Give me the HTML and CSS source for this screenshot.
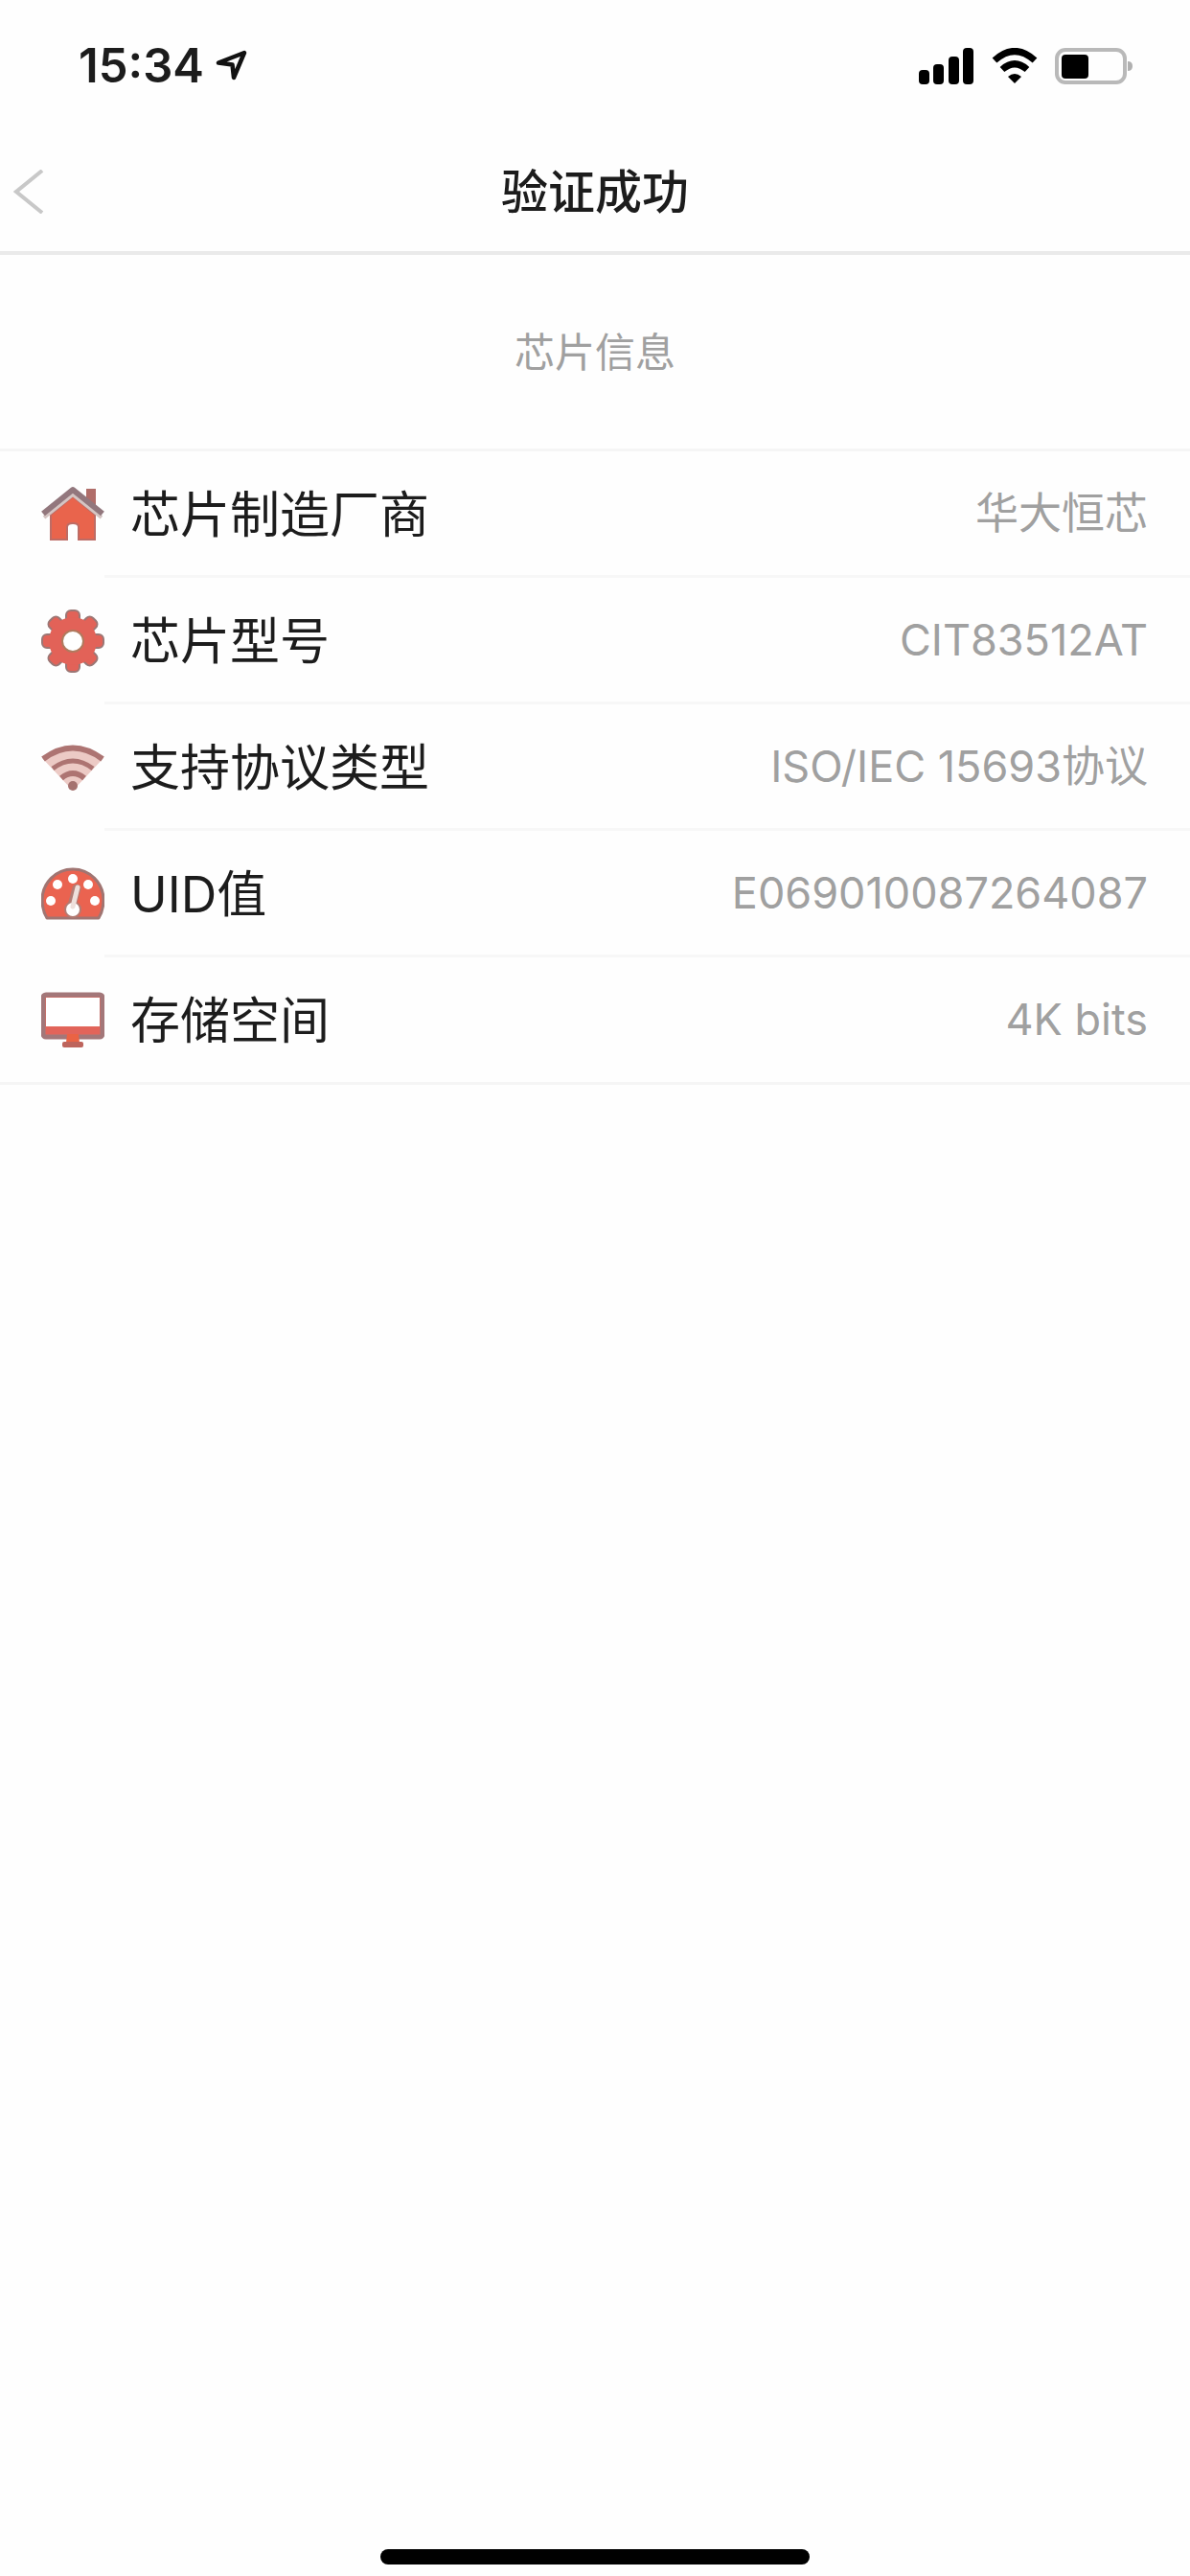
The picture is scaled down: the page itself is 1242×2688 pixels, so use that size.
FILE: index.html
```
<!DOCTYPE html>
<html lang="zh-CN">
  <head>
    <meta charset="UTF-8" />
    <meta name="viewport" content="width=device-width, initial-scale=1.0" />
    <title>验证成功</title>
    <link rel="stylesheet" href="styles.css" />
  </head>
  <body>
    <div class="page">
      <div class="status-bar">
        <div class="status-left">
          <time>15:34</time>
          <svg class="location" width="34" height="34" viewBox="0 0 34 34">
            <path d="M3 13.500L30 3L19 29L17.500 15.500Z" fill="none" stroke="#111" stroke-width="4.500" stroke-linejoin="round" />
          </svg>
        </div>
        <div class="status-right">
          <svg width="58" height="38" viewBox="0 0 58 38">
            <rect x="0" y="23" width="11" height="15" rx="4" />
            <rect x="15" y="17" width="11" height="21" rx="4" />
            <rect x="31" y="9" width="11" height="29" rx="4" />
            <rect x="46" y="0" width="11" height="38" rx="4" />
          </svg>
          <svg width="48" height="38" viewBox="0 0 48 38">
            <path d="M3 13Q24 -6 45 13" fill="none" stroke="#000" stroke-width="7" />
            <path d="M11 22.500Q24 11 37 22.500" fill="none" stroke="#000" stroke-width="7" />
            <path d="M17 30Q24 24 31 30L24 37Z" />
          </svg>
          <svg width="82" height="38" viewBox="0 0 82 38">
            <rect x="2" y="2" width="71" height="34" rx="9" fill="none" stroke="#b9b9b9" stroke-width="4" />
            <rect x="7" y="7" width="28" height="25" rx="4" />
            <path d="M76 14Q81 14 81 19Q81 24 76 24Z" fill="#b0b0b0" />
          </svg>
        </div>
      </div>

      <header class="nav-bar">
        <button type="button" class="back-button" aria-label="返回">
          <svg width="32" height="46" viewBox="0 0 32 46">
            <path d="M30 1L3 23L30 45" fill="none" stroke="#c8c8c8" stroke-width="4" />
          </svg>
        </button>
        <h1>验证成功</h1>
      </header>

      <main>
        <h2>芯片信息</h2>
        <dl class="info-list">
          <div class="info-row">
            <svg class="icon" viewBox="0 0 66 66">
              <path d="M47 6H57V25L47 16Z" fill="#b06d69" />
              <path d="M10 33L33 14L56 33V59H39V46Q39 42 33 42Q27 42 27 46V59H10Z" fill="#e9644c" stroke="#bd6c65" stroke-width="2" />
              <path d="M3 36L33 12L63 36" fill="none" stroke="#d5c5c3" stroke-width="4" />
              <path d="M2 32L33 7L64 32" fill="none" stroke="#92777d" stroke-width="6" stroke-linejoin="round" />
            </svg>
            <div class="cell">
              <dt>芯片制造厂商</dt>
              <dd>华大恒芯</dd>
            </div>
          </div>
          <div class="info-row">
            <svg class="icon" viewBox="0 0 66 66">
              <g fill="#e26258" stroke="#9b7775" stroke-width="2">
                <rect x="26" y="1" width="14" height="64" rx="5" />
                <rect x="26" y="1" width="14" height="64" rx="5" transform="rotate(45 33 33)" />
                <rect x="26" y="1" width="14" height="64" rx="5" transform="rotate(90 33 33)" />
                <rect x="26" y="1" width="14" height="64" rx="5" transform="rotate(135 33 33)" />
              </g>
              <circle cx="33" cy="33" r="25" fill="#e26258" />
              <circle cx="33" cy="33" r="11" fill="#fff" stroke="#b07a5e" stroke-width="2" />
            </svg>
            <div class="cell">
              <dt>芯片型号</dt>
              <dd>CIT83512AT</dd>
            </div>
          </div>
          <div class="info-row">
            <svg class="icon" viewBox="0 0 66 66">
              <path d="M1 23Q33 -3 65 23L33 57Z" fill="#eccac5" />
              <g fill="none" stroke="#ad7472" stroke-width="6">
                <path d="M2 24Q33 1 64 24" />
                <path d="M12 34Q33 18 54 34" stroke-width="5" />
                <path d="M21 44Q33 34 45 44" />
              </g>
              <circle cx="33" cy="52" r="5" fill="#a5726f" />
            </svg>
            <div class="cell">
              <dt>支持协议类型</dt>
              <dd>ISO/IEC 15693协议</dd>
            </div>
          </div>
          <div class="info-row">
            <svg class="icon" viewBox="0 0 66 66">
              <path d="M6 58Q1 50 1 39A32 32 0 0 1 65 39Q65 50 60 58Z" fill="#ea6350" stroke="#a07572" stroke-width="3" stroke-linejoin="round" />
              <g fill="#fff">
                <circle cx="10" cy="40" r="5" />
                <circle cx="17" cy="23" r="5" />
                <circle cx="33" cy="17" r="5" />
                <circle cx="49" cy="23" r="5" />
                <circle cx="56" cy="40" r="5" />
              </g>
              <path d="M37 27L32 45" fill="none" stroke="#b27b73" stroke-width="9" stroke-linecap="round" />
              <circle cx="33" cy="49" r="8" fill="#fff" stroke="#b27b73" stroke-width="2" />
              <path d="M38 26L33 46" fill="none" stroke="#eee0dc" stroke-width="5" stroke-linecap="round" />
            </svg>
            <div class="cell">
              <dt>UID值</dt>
              <dd>E069010087264087</dd>
            </div>
          </div>
          <div class="info-row">
            <svg class="icon" viewBox="0 0 66 66">
              <rect x="2" y="7" width="62" height="44" rx="3" fill="#e2685c" />
              <rect x="5" y="10" width="56" height="30" fill="#fff" />
              <rect x="2" y="7" width="62" height="44" rx="3" fill="none" stroke="#a37779" stroke-width="5" />
              <path d="M5 41H61V48H5Z" fill="#e2645a" />
              <path d="M27 48H39L40 57H26Z" fill="#ea6344" />
              <rect x="22" y="56" width="22" height="6" rx="2" fill="#bd645c" />
            </svg>
            <div class="cell">
              <dt>存储空间</dt>
              <dd>4K bits</dd>
            </div>
          </div>
        </dl>
      </main>

      <div class="home-indicator"></div>
    </div>
  </body>
</html>
```

FILE: styles.css
```
* {
  box-sizing: border-box;
}
body {
  margin: 0;
  background-color: #fefefe;
  color: #1c1c1c;
  font-family: Inter, "Noto Sans CJK SC", sans-serif;
  line-height: 64px;
}
.page {
  display: flex;
  flex-direction: column;
  min-height: 100vh;
}
.status-bar {
  display: flex;
  justify-content: space-between;
  align-items: center;
  height: 138px;
  padding: 0 59px 0 82px;
}
.status-left,
.status-right {
  display: flex;
  align-items: center;
}
.status-left {
  gap: 12px;
  font-size: 49px;
  font-weight: 600;
}
.status-right {
  gap: 18px;
}
.nav-bar {
  display: grid;
  grid-template-columns: 1fr auto 1fr;
  align-items: center;
  height: 128px;
  border-bottom: 4px solid #eaeaea;
}
.back-button {
  display: flex;
  justify-self: start;
  padding: 14px;
  border: 0;
  background: none;
  cursor: pointer;
}
h1 {
  margin: 0;
  padding-top: 2px;
  font-size: 49px;
  font-weight: 500;
}
h2 {
  margin: 0;
  padding: 70px 0 68px;
  color: #a0a0a0;
  font-size: 42px;
  font-weight: 400;
  text-align: center;
}
.info-list {
  margin: 0;
  border-top: 3px solid #f5f5f5;
  border-bottom: 3px solid #f5f5f5;
}
.info-row {
  display: flex;
  align-items: center;
  padding-left: 43px;
}
.icon {
  flex: none;
  width: 66px;
  height: 66px;
}
.cell {
  display: flex;
  flex: 1;
  justify-content: space-between;
  align-items: center;
  height: 132px;
  padding: 0 44px 0 27px;
  border-bottom: 3px solid #f7f7f7;
}
.info-row:last-child .cell {
  height: 130px;
  border-bottom: 0;
}
dt {
  padding-top: 4px;
  font-size: 52px;
}
dd {
  margin: 0;
  color: #a0a0a0;
  font-size: 45px;
}
.home-indicator {
  width: 36%;
  height: 16px;
  margin: auto auto 12px;
  border-radius: 8px;
  background-color: #000;
}
```
